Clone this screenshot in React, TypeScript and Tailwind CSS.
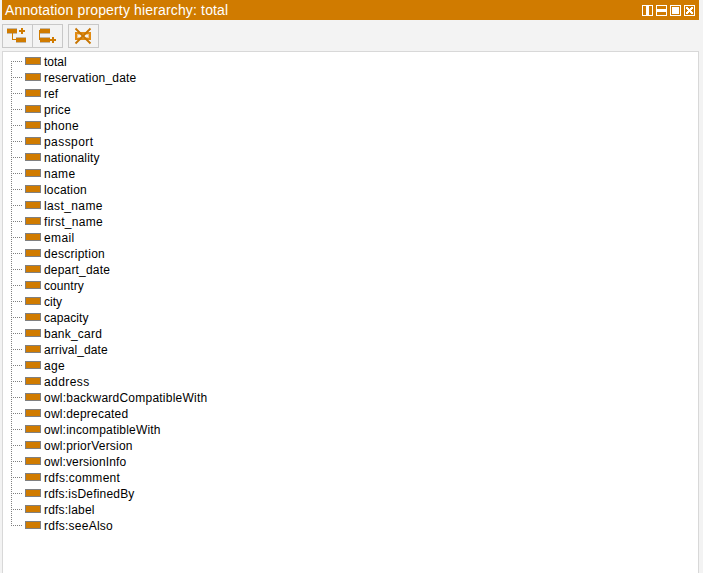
import React from 'react';

// Each entry: property name and the extra label width, in pixels, spread over its letters.
const properties: [string, number][] = [
  ['total', 0], ['reservation_date', 3], ['ref', 0], ['price', 0.7], ['phone', 1.5],
  ['passport', 3.5], ['nationality', 1.5], ['name', 1.5], ['location', 1.5], ['last_name', 3.5],
  ['first_name', 3], ['email', 2], ['description', 3], ['depart_date', 2], ['country', 0.5],
  ['city', 0], ['capacity', 0.5], ['bank_card', 2], ['arrival_date', 1], ['age', 0.8],
  ['address', 3], ['owl:backwardCompatibleWith', 6], ['owl:deprecated', 3],
  ['owl:incompatibleWith', 4], ['owl:priorVersion', 3.3], ['owl:versionInfo', 2.3],
  ['rdfs:comment', 3.5], ['rdfs:isDefinedBy', 3.2], ['rdfs:label', 2], ['rdfs:seeAlso', 3],
];

function WindowIcon({ children }: { children: React.ReactNode }) {
  return (
    <svg width="11" height="11" viewBox="0 0 11 11" shapeRendering="crispEdges" fill="white">
      <rect x="0.5" y="0.5" width="10" height="10" fill="none" stroke="white" />
      {children}
    </svg>
  );
}

function ToolButton({ label, children }: { label: string; children: React.ReactNode }) {
  return (
    <button aria-label={label} className="h-6 w-[31px] border border-[#c8c8c8] bg-[#f3f3f3]">
      <svg width="29" height="22" viewBox="0 0 29 22" shapeRendering="crispEdges">{children}</svg>
    </button>
  );
}

function Bar({ x, y }: { x: number; y: number }) {
  return (
    <>
      <rect x={x} y={y} width="10" height="6" fill="#c4b8a6" />
      <rect x={x + 0} y={y + 1} width="10" height="4" fill="#d07b00" />
    </>
  );
}

function Toolbar() {
  return (
    <div className="flex h-[31px] pt-1">
      <ToolButton label="Add sub property">
        <Bar x={4} y={3} />
        <Bar x={13} y={12} />
        <path d="M9 8h1v6h4v1h-5z" fill="#d07b00" />
        <path d="M16 5h6v2h-6zM18 3h2v6h-2z" fill="#d07b00" />
      </ToolButton>
      <div className="-ml-px flex">
        <ToolButton label="Add sibling property">
          <Bar x={7} y={3} />
          <Bar x={7} y={12} />
          <path d="M8 5h-2v10h2v-1h-1v-8h1z" fill="#d07b00" />
          <path d="M17 14h6v2h-6zM19 12h2v6h-2z" fill="#d07b00" />
        </ToolButton>
      </div>
      <div className="ml-[5px] flex">
        <ToolButton label="Delete property">
          <rect x="7" y="8" width="14" height="6" fill="#eec68c" stroke="#e08a12" strokeWidth="2" />
          <rect x="9" y="10" width="3" height="2" fill="#f3f3f3" />
          <rect x="16" y="10" width="3" height="2" fill="#f3f3f3" />
          <path d="M6.5 3.5L21.5 18.5M21.5 3.5L6.5 18.5" stroke="#c87500" strokeWidth="1.8" shapeRendering="auto" />
        </ToolButton>
      </div>
    </div>
  );
}

function TreeRow({ name, extra, first, last }: { name: string; extra: number; first: boolean; last: boolean }) {
  return (
    <li className="flex h-4">
      <svg width="14" height="16" shapeRendering="crispEdges" fill="none" stroke="#808080" strokeDasharray="1 1">
        <path d={first ? 'M0.5 7V16' : last ? 'M0.5 1V8' : 'M0.5 1V16'} />
        <path d="M0 7.5H12" />
      </svg>
      <span className="mt-[3px] flex h-2 w-4 bg-[#808080] p-px">
        <span className="flex-1 bg-[#d07b00]" />
      </span>
      <span
        className="ml-[3px] text-[12px] leading-4 whitespace-nowrap"
        style={{ letterSpacing: `${extra / name.length}px` }}
      >
        {name}
      </span>
    </li>
  );
}

export default function App() {
  return (
    <div className="flex h-[573px] w-[703px] flex-col overflow-hidden bg-[#f3f3f3] pr-1 pl-0.5 font-['Liberation_Sans',Arial,sans-serif] text-black">
      <header className="flex h-5 shrink-0 items-center justify-between bg-[#d07b00] pr-1 pl-[3px] text-white">
        <h1 className="text-[14px] leading-5 tracking-[0.15px] whitespace-nowrap">Annotation property hierarchy: total</h1>
        <div className="flex gap-[3px]">
          <WindowIcon><rect x="4" y="1" width="3" height="9" /></WindowIcon>
          <WindowIcon><rect x="1" y="4" width="9" height="3" /></WindowIcon>
          <WindowIcon><rect x="2" y="2" width="7" height="7" /></WindowIcon>
          <WindowIcon>
            <path d="M2 2h2v1h3v-1h2v2h-1v3h1v2h-2v-1h-3v1h-2v-2h1v-3h-1z" />
            <path d="M5 3h1v1h-1zM3 5h1v1h-1zM7 5h1v1h-1zM5 7h1v1h-1z" fill="#d07b00" />
          </WindowIcon>
        </div>
      </header>
      <Toolbar />
      <main className="flex-1 border border-b-0 border-[#d8d8d8] bg-white pt-0.5 pl-2">
        <ul>
          {properties.map(([name, extra], i) => (
            <TreeRow key={name} name={name} extra={extra} first={i === 0} last={i === properties.length - 1} />
          ))}
        </ul>
      </main>
    </div>
  );
}
